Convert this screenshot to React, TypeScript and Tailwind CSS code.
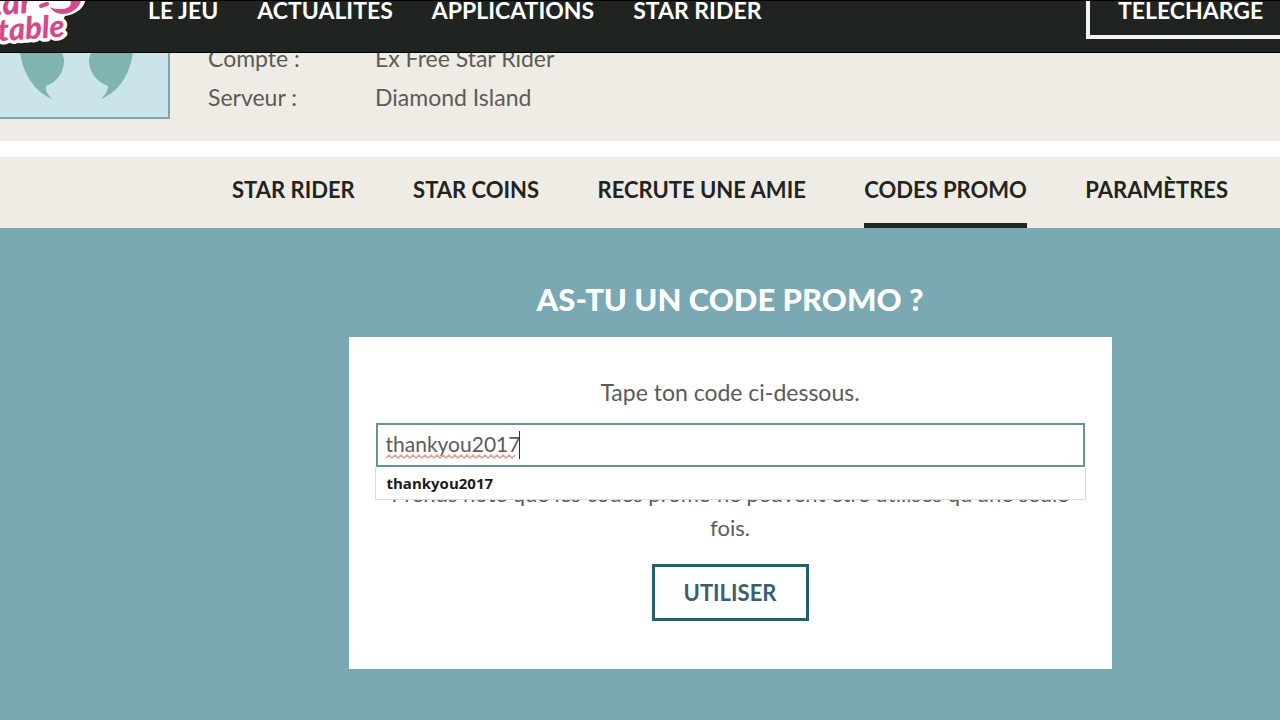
import { useState } from "react";

const navLinks = ["LE JEU", "ACTUALITÉS", "APPLICATIONS", "STAR RIDER"];

const tabs = ["STAR RIDER", "STAR COINS", "RECRUTE UNE AMIE", "CODES PROMO", "PARAMÈTRES"];

function Logo() {
  return (
    <svg viewBox="0 0 100 52" className="h-[52px] w-[100px]" role="img" aria-label="Star Stable">
      <path d="M-4 -4H86C85 6 78 13 65 15L60 26H-4Z" fill="#fff" />
      <g
        transform="rotate(-4 30 30)"
        fill="#d6498a"
        fontFamily="Lato, sans-serif"
        fontWeight="900"
        fontStyle="italic"
      >
        <g stroke="#fff" strokeWidth="7" strokeLinejoin="round" style={{ paintOrder: "stroke" }}>
          <text x="-25" y="12" fontSize="34">Star</text>
          <text x="-15" y="38" fontSize="31">stable</text>
        </g>
      </g>
      <path d="M50 6C54 14 66 15 73 10C78 7 80 4 81 -1H70C73 4 68 8 62 8C57 8 53 8 50 6Z" fill="#d6498a" />
      <path d="M41 5L47 3" stroke="#d6498a" strokeWidth="4" strokeLinecap="round" />
    </svg>
  );
}

function Header() {
  return (
    <header className="flex h-[53px] items-start overflow-hidden border-y border-black bg-[#202421] text-white">
      <div className="w-[148px] shrink-0">
        <Logo />
      </div>
      <nav className="flex gap-[39px] text-[23px] leading-[18px] font-bold whitespace-nowrap">
        {navLinks.map((label) => (
          <a key={label} href="#">
            {label}
          </a>
        ))}
      </nav>
      <a
        href="#"
        className="ml-auto h-[38px] w-[194px] shrink-0 border-b-4 border-l-4 border-[#f1f4f1] pl-7 text-[23px] leading-[18px] font-bold whitespace-nowrap"
      >
        TÉLÉCHARGE
      </a>
    </header>
  );
}

function Profile() {
  return (
    <section className="flex h-22 items-end overflow-hidden bg-[#efece5]">
      <div className="mb-[22px] h-[66px] w-[170px] shrink-0 border-r-2 border-b-2 border-[#7da5aa] bg-[#cbe4e9]">
        <svg viewBox="0 0 168 64" className="h-16 w-[168px]" fill="#7fb4b1" aria-hidden="true">
          <path d="M20 -2C22 18 33 38 52 46C48 42 45 38 46 33C57 29 64 19 64 8C64 3 62 0 60 -2Z" />
          <path d="M133 -2C131 18 121 38 101 46C105 42 108 38 108 33C97 29 89 19 89 8C89 3 91 0 93 -2Z" />
        </svg>
      </div>
      <dl className="mb-6 ml-[38px] grid grid-cols-[167px_auto] text-[23px] leading-[39px] text-[#5c5b58]">
        <dt>Compte :</dt>
        <dd>Ex Free Star Rider</dd>
        <dt>Serveur :</dt>
        <dd>Diamond Island</dd>
      </dl>
    </section>
  );
}

function Tabs() {
  return (
    <nav className="mt-4 bg-[#efece5] pr-[52px] pl-[232px]">
      <ul className="flex justify-between text-[22px] font-bold whitespace-nowrap text-[#222421]">
        {tabs.map((label) => (
          <li key={label}>
            <a
              href="#"
              aria-current={label === "CODES PROMO" ? "page" : undefined}
              className="block border-b-[5px] border-transparent leading-[66px] aria-[current=page]:border-[#222728]"
            >
              {label}
            </a>
          </li>
        ))}
      </ul>
    </nav>
  );
}

function PromoForm() {
  const [code, setCode] = useState("thankyou2017");
  return (
    <main className="grow bg-[#7aa8b3] pt-[47px] pb-[52px] pl-[180px]">
      <h1 className="text-center text-[31px] leading-[48px] font-black text-white">AS-TU UN CODE PROMO ?</h1>
      <form
        className="mx-auto mt-[14px] flex max-w-[763px] flex-col items-center bg-white px-[27px] pt-9 pb-12 text-[22px] text-[#5b5b5b]"
        onSubmit={(event) => event.preventDefault()}
      >
        <label htmlFor="code" className="text-[23px] leading-[38px]">
          Tape ton code ci-dessous.
        </label>
        <div className="relative mt-3 w-full">
          <div className="relative">
            <input
              id="code"
              type="text"
              autoComplete="off"
              value={code}
              onChange={(event) => setCode(event.target.value)}
              className="block h-11 w-full border-2 border-[#66939b] bg-white px-2 pb-1 text-[21px] outline-none"
            />
            <div className="pointer-events-none absolute top-2 left-[10px] flex h-7 items-stretch" aria-hidden="true">
              <svg width="133" height="28" fill="none" stroke="#e29a98">
                <path
                  strokeWidth="1.5"
                  d="M0 27l3-3l3 3l3-3l3 3l3-3l3 3l3-3l3 3l3-3l3 3l3-3l3 3l3-3l3 3l3-3l3 3l3-3l3 3l3-3l3 3l3-3l3 3l3-3l3 3l3-3l3 3l3-3l3 3l3-3l3 3l3-3l3 3l3-3l3 3l3-3l3 3l3-3l3 3l3-3l3 3l3-3l3 3l3-3"
                />
              </svg>
              <span className="w-px bg-[#333]" />
            </div>
          </div>
          <ul className="absolute -inset-x-px top-full border border-t-0 border-[#dcdcda] bg-white">
            <li>
              <button
                type="button"
                onClick={() => setCode("thankyou2017")}
                className="block h-8 w-full px-[11px] text-left font-['Open_Sans',sans-serif] text-[15px] font-bold text-[#1b1b1b]"
              >
                thankyou2017
              </button>
            </li>
          </ul>
        </div>
        <p className="mt-[10px] text-center leading-[34px]">
          Prends note que les codes promo ne peuvent être utilisés qu'une seule fois.
        </p>
        <button
          type="submit"
          className="mt-[19px] h-[57px] w-[157px] border-[3px] border-[#1f616e] text-[22px] font-bold text-[#36616d]"
        >
          UTILISER
        </button>
      </form>
    </main>
  );
}

export default function App() {
  return (
    <div className="flex min-h-screen flex-col bg-white font-[Lato,sans-serif]">
      <Header />
      <Profile />
      <Tabs />
      <PromoForm />
    </div>
  );
}
